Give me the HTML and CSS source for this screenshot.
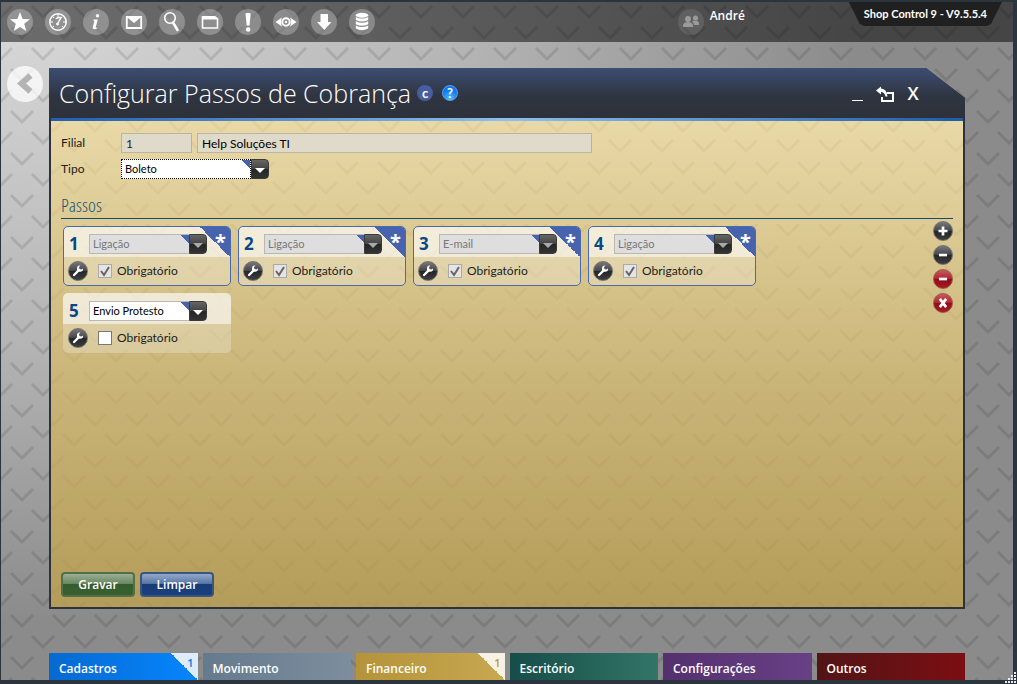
FILE: index.html
```
<!DOCTYPE html>
<html lang="pt-BR">
<head>
    <meta charset="UTF-8">
    <meta name="viewport" content="width=device-width, initial-scale=1.0">
    <title>Shop Control 9</title>
    <link rel="stylesheet" href="styles.css">
</head>
<body>

    <!-- Shared icons -->
    <svg class="sprite" aria-hidden="true">
        <symbol id="wrench" viewBox="0 0 20 20">
            <path d="M5.6 14.4 11 9" stroke="#fff" stroke-width="2.6" stroke-linecap="round"/>
            <path d="M15.6 7.1a3.4 3.4 0 1 1-3-3.1l-1.5 1.8.5 1.9 2 .5z" fill="#fff"/>
        </symbol>
    </svg>

    <div class="app">

        <!-- Top bar -->
        <header class="topbar">
            <nav class="tools">
                <button class="tool" aria-label="Favoritos"><svg viewBox="0 0 26 26"><path d="M13 3l2.6 6.900 7.400.3-5.800 4.600 2 7.100-6.200-4-6.200 4 2-7.100L3 10.200l7.400-.3z" fill="#fff"/></svg></button>
                <button class="tool" aria-label="Painel"><svg viewBox="0 0 26 26" fill="none" stroke="#fff"><circle cx="13" cy="13" r="8.200" stroke-width="1.500"/><path d="M13 5v3M5 13h3M18 13h3M7.500 7.500l1.500 1.500M7.500 18.500l1.500-1.500M18.500 18.500l-1.500-1.500"/><path d="M11 10q1-2 5-1.500L13 14" stroke-width="1.500"/><circle cx="12.500" cy="15" r="1" fill="#fff"/></svg></button>
                <button class="tool" aria-label="Informações"><svg viewBox="0 0 26 26"><circle cx="14.500" cy="6.800" r="1.700" fill="#fff"/><path d="M10.500 10.500h4.300l-2 7.600c-.2.900.4.900 1.600.2l-.3 1.100c-1.900 1.200-5 1.300-4.400-1.100l1.600-6.100c.2-.7-.3-.8-1.200-.8z" fill="#fff"/></svg></button>
                <button class="tool" aria-label="Mensagens"><svg viewBox="0 0 26 26"><path d="M5.800 8h14.400v11H5.800z" fill="none" stroke="#fff" stroke-width="1.800"/><path d="M5.800 8l7.200 6 7.200-6z" fill="#fff"/></svg></button>
                <button class="tool" aria-label="Pesquisar"><svg viewBox="0 0 26 26" fill="none" stroke="#fff"><circle cx="11" cy="9" r="5.300" stroke-width="1.600"/><path d="M14 13.500l4.500 7.500" stroke-width="2.600" stroke-linecap="round"/></svg></button>
                <button class="tool" aria-label="Janelas"><svg viewBox="0 0 26 26"><path d="M5.500 8h12.500l2.500 2v9h-15z" fill="none" stroke="#fff" stroke-width="1.600"/><path d="M5 7h13l2 3.500H5z" fill="#fff"/></svg></button>
                <button class="tool" aria-label="Alertas"><svg viewBox="0 0 26 26"><path d="M10.500 4.500q2.500-1.600 5.200 0l-1.200 12h-2.800z" fill="#fff"/><circle cx="13.200" cy="20.500" r="2.200" fill="#fff"/></svg></button>
                <button class="tool" aria-label="Visualizar"><svg viewBox="0 0 26 26" fill="none" stroke="#fff" stroke-width="2"><circle cx="13" cy="13" r="3.700"/><circle cx="13" cy="13" r="1.200" fill="#fff" stroke="none"/><path d="M2.500 13l6.500-4.500q-2 4.500 0 9zM23.500 13L17 8.500q2 4.500 0 9z" fill="#fff" stroke="none"/></svg></button>
                <button class="tool" aria-label="Baixar"><svg viewBox="0 0 26 26"><path d="M9.500 5h7.500v8h3.500l-7.200 8-7.300-8h3.500z" fill="#fff"/></svg></button>
                <button class="tool" aria-label="Banco de dados"><svg viewBox="0 0 26 26" fill="#fff"><ellipse cx="13" cy="6.200" rx="6.200" ry="2.500"/><path d="M6.800 8q6.200 3 12.400 0v3q-6.200 3-12.400 0zM6.800 12.300q6.200 3 12.400 0v3q-6.200 3-12.400 0zM6.800 16.600q6.200 3 12.400 0v3q-6.200 3.500-12.400 0z"/></svg></button>
            </nav>
            <div class="user">
                <span class="user-icon"><svg viewBox="0 0 26 26" fill="#9a9a9a"><circle cx="10" cy="10" r="3"/><path d="M5 18v-2q1-3 5-3t5 3v2z"/><circle cx="17.500" cy="9" r="2.500"/><path d="M14 12q6-1.500 7 2v2h-5q-.3-2-2-4z"/></svg></span>
                <span class="user-name">André</span>
            </div>
            <div class="version">Shop Control 9 - V9.5.5.4</div>
        </header>

        <div class="workspace">
            <div class="side">
                <button class="back" aria-label="Voltar"><svg viewBox="0 0 36 36"><path d="M23.500 9.500L14.500 17.500l9 8" fill="none" stroke="#b4b4b4" stroke-width="6"/></svg></button>
            </div>

            <!-- Main window -->
            <main class="window">
                <div class="window-header">
                    <h1 class="window-title">Configurar Passos de Cobrança</h1>
                    <button class="badge badge-code" aria-label="Código">c</button>
                    <button class="badge badge-help" aria-label="Ajuda">?</button>
                    <div class="window-controls">
                        <button class="control" aria-label="Minimizar"><svg viewBox="0 0 20 20"><path d="M5 17.500h11" stroke="#fff"/></svg></button>
                        <button class="control" aria-label="Restaurar"><svg viewBox="0 0 20 20"><path d="M12 10h6v8H7v-4" fill="none" stroke="#fff" stroke-width="2"/><path d="M1 7.500L6 3.500v2q6 .5 6.500 8h-2Q9.500 9 6 9v2.500z" fill="#fff"/></svg></button>
                        <button class="control" aria-label="Fechar">X</button>
                    </div>
                </div>

                <form class="window-body">
                    <div class="row">
                        <label class="label" for="filial">Filial</label>
                        <input class="field field-code" id="filial" type="text" value="1" readonly>
                        <input class="field field-name" type="text" value="Help Soluções TI" aria-label="Nome da filial" readonly>
                    </div>
                    <div class="row">
                        <label class="label" for="tipo">Tipo</label>
                        <span class="combo combo-tipo">
                            <select id="tipo"><option>Boleto</option></select>
                            <span class="arrow"></span>
                        </span>
                    </div>

                    <h2 class="section-title">Passos</h2>

                    <div class="steps-area">
                        <div class="steps">
                            <div class="step locked">
                                <div class="step-top">
                                    <label class="step-number" for="passo1">1</label>
                                    <span class="combo"><select id="passo1" disabled><option>Ligação</option></select><span class="arrow"></span></span>
                                    <span class="required">*</span>
                                </div>
                                <div class="step-bottom">
                                    <button type="button" class="round" aria-label="Configurar passo 1"><svg><use href="#wrench"/></svg></button>
                                    <input type="checkbox" id="obr1" checked disabled>
                                    <label for="obr1">Obrigatório</label>
                                </div>
                            </div>
                            <div class="step locked">
                                <div class="step-top">
                                    <label class="step-number" for="passo2">2</label>
                                    <span class="combo"><select id="passo2" disabled><option>Ligação</option></select><span class="arrow"></span></span>
                                    <span class="required">*</span>
                                </div>
                                <div class="step-bottom">
                                    <button type="button" class="round" aria-label="Configurar passo 2"><svg><use href="#wrench"/></svg></button>
                                    <input type="checkbox" id="obr2" checked disabled>
                                    <label for="obr2">Obrigatório</label>
                                </div>
                            </div>
                            <div class="step locked">
                                <div class="step-top">
                                    <label class="step-number" for="passo3">3</label>
                                    <span class="combo"><select id="passo3" disabled><option>E-mail</option></select><span class="arrow"></span></span>
                                    <span class="required">*</span>
                                </div>
                                <div class="step-bottom">
                                    <button type="button" class="round" aria-label="Configurar passo 3"><svg><use href="#wrench"/></svg></button>
                                    <input type="checkbox" id="obr3" checked disabled>
                                    <label for="obr3">Obrigatório</label>
                                </div>
                            </div>
                            <div class="step locked">
                                <div class="step-top">
                                    <label class="step-number" for="passo4">4</label>
                                    <span class="combo"><select id="passo4" disabled><option>Ligação</option></select><span class="arrow"></span></span>
                                    <span class="required">*</span>
                                </div>
                                <div class="step-bottom">
                                    <button type="button" class="round" aria-label="Configurar passo 4"><svg><use href="#wrench"/></svg></button>
                                    <input type="checkbox" id="obr4" checked disabled>
                                    <label for="obr4">Obrigatório</label>
                                </div>
                            </div>
                            <div class="step">
                                <div class="step-top">
                                    <label class="step-number" for="passo5">5</label>
                                    <span class="combo"><select id="passo5"><option>Envio Protesto</option></select><span class="arrow"></span></span>
                                </div>
                                <div class="step-bottom">
                                    <button type="button" class="round" aria-label="Configurar passo 5"><svg><use href="#wrench"/></svg></button>
                                    <input type="checkbox" id="obr5">
                                    <label for="obr5">Obrigatório</label>
                                </div>
                            </div>
                        </div>
                        <div class="step-actions">
                            <button type="button" class="round" aria-label="Adicionar"><svg viewBox="0 0 20 20"><path d="M5 10h10M10 5v10" stroke="#fff" stroke-width="3"/></svg></button>
                            <button type="button" class="round" aria-label="Remover"><svg viewBox="0 0 20 20"><path d="M5.500 10h9" stroke="#fff" stroke-width="3"/></svg></button>
                            <button type="button" class="round red" aria-label="Remover último"><svg viewBox="0 0 20 20"><path d="M5.500 10h9" stroke="#fff" stroke-width="3"/></svg></button>
                            <button type="button" class="round red" aria-label="Excluir todos"><svg viewBox="0 0 20 20"><path d="M6.500 5.500l7 9M13.500 5.500l-7 9" stroke="#fff" stroke-width="3"/></svg></button>
                        </div>
                    </div>

                    <div class="actions">
                        <button type="button" class="btn btn-green">Gravar</button>
                        <button type="button" class="btn btn-blue">Limpar</button>
                    </div>
                </form>
            </main>
        </div>

        <!-- Bottom menu -->
        <nav class="menu">
            <a class="tab cadastros" href="#">Cadastros<span class="count">1</span></a>
            <a class="tab movimento" href="#">Movimento</a>
            <a class="tab financeiro" href="#">Financeiro<span class="count">1</span></a>
            <a class="tab escritorio" href="#">Escritório</a>
            <a class="tab configuracoes" href="#">Configurações</a>
            <a class="tab outros" href="#">Outros</a>
        </nav>

        <svg class="grip" viewBox="0 0 12 12" aria-hidden="true"><path d="M9 1h2M6 4h2M9 4h2M3 7h2M6 7h2M9 7h2M0 10h2M3 10h2M6 10h2M9 10h2" stroke="#e8eef2" stroke-width="2"/></svg>
    </div>

</body>
</html>
```
FILE: styles.css
```
* {
    box-sizing: border-box;
}

body {
    margin: 0;
    font-family: Lato, "Open Sans", sans-serif;
    font-size: 12px;
    line-height: 16px;
    color: #1c1c1c;
}

button, input, select {
    font: inherit;
    margin: 0;
}

button {
    border: 0;
    padding: 0;
    background: none;
    cursor: pointer;
}

svg {
    display: block;
    width: 100%;
    height: 100%;
}

.sprite {
    position: absolute;
    width: 0;
    height: 0;
}

/* Page frame with the chevron pattern */
.app {
    position: relative;
    display: flex;
    flex-direction: column;
    min-height: 100vh;
    border: solid #2c343e;
    border-width: 2px 4px 4px 1px;
    background:
        url("data:image/svg+xml,%3Csvg xmlns='http://www.w3.org/2000/svg' width='42' height='42' fill='none' stroke='%23000' stroke-opacity='.11' stroke-width='3'%3E%3Cpath d='M10 25l11 11 11-11M-11 4L0 15 11 4M31 4l11 11L53 4'/%3E%3C/svg%3E"),
        radial-gradient(ellipse 860px 620px at 0 0, #dadada, #b4b4b4 55%, #8b8b8b);
}

/* Top bar */
.topbar {
    display: flex;
    align-items: center;
    height: 40px;
    padding: 0 11px 0 6px;
    background: rgba(0, 0, 0, 0.5);
}

.tools {
    display: flex;
    gap: 12px;
}

.tool, .user-icon {
    width: 26px;
    height: 26px;
    border-radius: 50%;
    background: rgba(255, 255, 255, 0.27);
}

.user {
    display: flex;
    gap: 6px;
    margin-left: auto;
    margin-right: 104px;
}

.user-icon {
    background: rgba(255, 255, 255, 0.1);
}

.user-name {
    color: #fff;
    font-family: "Open Sans", sans-serif;
    font-weight: 600;
    line-height: 14px;
}

.version {
    align-self: flex-start;
    height: 24px;
    padding: 4px 15px;
    color: #fff;
    font-weight: 700;
    font-size: 11px;
    background: #202020;
    clip-path: polygon(0 0, 100% 0, calc(100% - 11px) 92%, calc(100% - 15px) 100%, 15px 100%, 11px 92%);
}

/* Workspace */
.workspace {
    flex: 1;
    display: flex;
    padding: 26px 48px 44px 0;
}

.side {
    width: 48px;
    padding-left: 6px;
}

.back {
    width: 36px;
    height: 36px;
    margin-top: -2px;
    border-radius: 50%;
    background: rgba(255, 255, 255, 0.75);
}

.window {
    flex: 1;
    display: flex;
    flex-direction: column;
    clip-path: polygon(0 0, calc(100% - 39px) 0, 100% 30px, 100% 100%, 0 100%);
    background: #2e323c;
    padding: 0 2px 2px;
}

.window-header {
    display: flex;
    align-items: center;
    height: 50px;
    margin: 0 -2px;
    padding: 0 42px 0 10px;
    background: linear-gradient(#3c4d74, #2f3541 55%, #2d313b);
    color: #fff;
}

.window-title {
    margin: 0 6px 0 0;
    font-family: "Open Sans", sans-serif;
    font-size: 25px;
    line-height: 34px;
    font-weight: 300;
}

.badge {
    width: 16px;
    height: 16px;
    margin-right: 9px;
    border-radius: 50%;
    color: #fff;
    font-size: 13px;
    font-weight: 700;
    line-height: 14px;
}

.badge-code {
    background: #475d9f;
}

.badge-help {
    background: radial-gradient(circle at 50% 90%, #4fc0ff, #1478e8 60%);
    border: 1px solid #4fa4f5;
}

.window-controls {
    display: flex;
    gap: 8px;
    margin-left: auto;
}

.control {
    width: 20px;
    height: 20px;
    color: #fff;
    font-family: "Open Sans", sans-serif;
    font-size: 18px;
    font-weight: 600;
    line-height: 20px;
}

.window-body {
    flex: 1;
    display: flex;
    flex-direction: column;
    padding: 12px 10px 10px;
    border-top: 3px solid;
    border-image: linear-gradient(90deg, #1f5fae, #8dc0ef 50%, #1d5ca6) 1;
    background:
        url("data:image/svg+xml,%3Csvg xmlns='http://www.w3.org/2000/svg' width='42' height='42' fill='none' stroke='%23705a10' stroke-opacity='.06' stroke-width='3'%3E%3Cpath d='M12 19l11 11 11-11M-9-1L2 10 13-1M33-1l11 11L55-1M-9 41L2 52 13 41M33 41l11 11L55 41'/%3E%3C/svg%3E"),
        linear-gradient(#e9d9a7, #c9b477 55%, #b49d5a);
}

/* Form rows */
.row {
    display: flex;
    align-items: center;
    height: 20px;
    margin-bottom: 6px;
}

.label {
    width: 60px;
}

.field {
    height: 20px;
    padding: 0 4px;
    border: 1px solid #b9b5a5;
    background: #dfdaca;
    color: #222;
}

.field-code {
    width: 71px;
    margin-right: 5px;
}

.field-name {
    width: 395px;
    color: #000;
}

.combo {
    position: relative;
    display: flex;
    width: 118px;
    height: 20px;
}

.combo-tipo {
    width: 148px;
}

.combo select {
    appearance: none;
    width: calc(100% - 18px);
    height: 20px;
    padding: 0 3px;
    border: 1px solid #b8b8b8;
    border-right: 0;
    border-radius: 0;
    background: linear-gradient(45deg, transparent 50%, #4763ad 50%) top right / 8px 8px no-repeat #fff;
    color: #000;
    font-size: 11px;
    opacity: 1;
}

.combo-tipo select {
    border: 1px dotted #000;
}

.combo select:disabled {
    background-color: #dedede;
    color: #777;
}

.arrow {
    width: 18px;
    height: 20px;
    border: 1px solid #3a3a3a;
    border-radius: 0 4px 4px 0;
    background: linear-gradient(#666, #444 48%, #252525 52%, #333);
    pointer-events: none;
}

.arrow::after {
    content: "";
    display: block;
    margin: 8px auto 0;
    width: 10px;
    height: 5px;
    background: #fff;
    clip-path: polygon(0 0, 100% 0, 50% 100%);
}

.combo select:disabled + .arrow::after {
    background: #aaa;
}

/* Steps */
.section-title {
    margin: 6px 0 0;
    height: 28px;
    border-bottom: 1px solid #164a68;
    color: #1d5474;
    font-family: "Open Sans Condensed Light", "Liberation Sans Narrow", "Liberation Sans", sans-serif;
    font-size: 19px;
    line-height: 28px;
    font-weight: 400;
}

.steps-area {
    flex: 1;
    display: flex;
    justify-content: space-between;
}

.steps {
    display: flex;
    flex-wrap: wrap;
    align-content: flex-start;
    gap: 7px;
    width: 720px;
    padding: 7px 2px;
}

.step {
    position: relative;
    width: 168px;
    height: 60px;
    border: 1px solid transparent;
    border-radius: 5px;
    overflow: hidden;
    background: linear-gradient(rgba(255, 255, 255, 0.65) 31px, rgba(255, 255, 255, 0.25) 31px) border-box;
}

.step.locked {
    border-color: #4b69af;
}

.step-top {
    display: flex;
    align-items: center;
    height: 30px;
    padding: 4px 5px 0;
}

.step-number {
    width: 20px;
    color: #0b4686;
    font-family: "Open Sans", sans-serif;
    font-size: 17px;
    font-weight: 700;
}

.required {
    position: absolute;
    top: 0;
    right: 0;
    width: 30px;
    height: 30px;
    padding: 4px 4px 0;
    color: #fff;
    font-family: "Open Sans", sans-serif;
    font-size: 20px;
    line-height: 22px;
    font-weight: 700;
    text-align: right;
    background: linear-gradient(45deg, transparent 50%, #4763ad 50%);
}

.step-bottom {
    display: flex;
    align-items: center;
    height: 28px;
    padding: 0 4px;
}

.step-bottom input {
    appearance: none;
    width: 14px;
    height: 14px;
    margin: 0 5px 0 10px;
    border: 1px solid #777;
    background: #fff;
}

.step-bottom input:disabled {
    border-color: #aaa;
    background-color: #e4e4e4;
}

.step-bottom input:checked {
    background-image: url("data:image/svg+xml,%3Csvg xmlns='http://www.w3.org/2000/svg' viewBox='0 0 12 12'%3E%3Cpath d='M2 6l3 4 5-8' fill='none' stroke='%23666' stroke-width='2'/%3E%3C/svg%3E");
}

.round {
    flex: none;
    width: 20px;
    height: 20px;
    border: 1px solid #777268;
    border-radius: 50%;
    background: linear-gradient(#77777c, #45464a 48%, #242529 52%, #3d3e42);
}

.round.red {
    border-color: #9b5a45;
    background: linear-gradient(#c45b60, #b12730 48%, #920c18 52%, #a31c26);
}

.step-actions {
    display: flex;
    flex-direction: column;
    gap: 4px;
    padding-top: 2px;
}

/* Form buttons */
.actions {
    display: flex;
    gap: 5px;
}

.btn {
    width: 74px;
    height: 25px;
    border: 2px solid;
    border-radius: 4px;
    color: #fff;
    font-family: "Open Sans", sans-serif;
    font-weight: 600;
}

.btn-green {
    border-color: #526f48;
    background: linear-gradient(#9aaf94, #6b8863 45%, #355c2d 50%, #38602f);
}

.btn-blue {
    border-color: #3a5583;
    background: linear-gradient(#94a9c9, #5877a5 45%, #173d78 50%, #183f7c);
}

/* Bottom menu */
.menu {
    display: grid;
    grid-template-columns: repeat(6, 1fr);
    gap: 5px;
    margin: 0 48px;
}

.tab {
    position: relative;
    height: 27px;
    padding: 0 10px;
    color: #fff;
    font-family: "Open Sans", sans-serif;
    font-weight: 600;
    line-height: 31px;
    text-decoration: none;
}

.count {
    position: absolute;
    top: 0;
    right: 0;
    width: 27px;
    height: 27px;
    padding-right: 4px;
    font-size: 11px;
    line-height: 20px;
    text-align: right;
}

.cadastros {
    background: linear-gradient(90deg, #0669d0, #0686ff);
}

.cadastros .count {
    color: #0b78e0;
    background: linear-gradient(45deg, transparent 50%, #dcecfb 50%);
}

.movimento {
    background: linear-gradient(90deg, #667a8e, #7c8e9d);
}

.financeiro {
    background: linear-gradient(90deg, #b4933a, #c8a850);
}

.financeiro .count {
    color: #b99a45;
    background: linear-gradient(45deg, transparent 50%, #f8f2e4 50%);
}

.escritorio {
    background: linear-gradient(90deg, #164d48, #327567);
}

.configuracoes {
    background: linear-gradient(90deg, #54306f, #684086);
}

.outros {
    background: linear-gradient(90deg, #521416, #7b0e12);
}

.grip {
    position: absolute;
    right: -4px;
    bottom: -4px;
    width: 12px;
    height: 12px;
}
```
